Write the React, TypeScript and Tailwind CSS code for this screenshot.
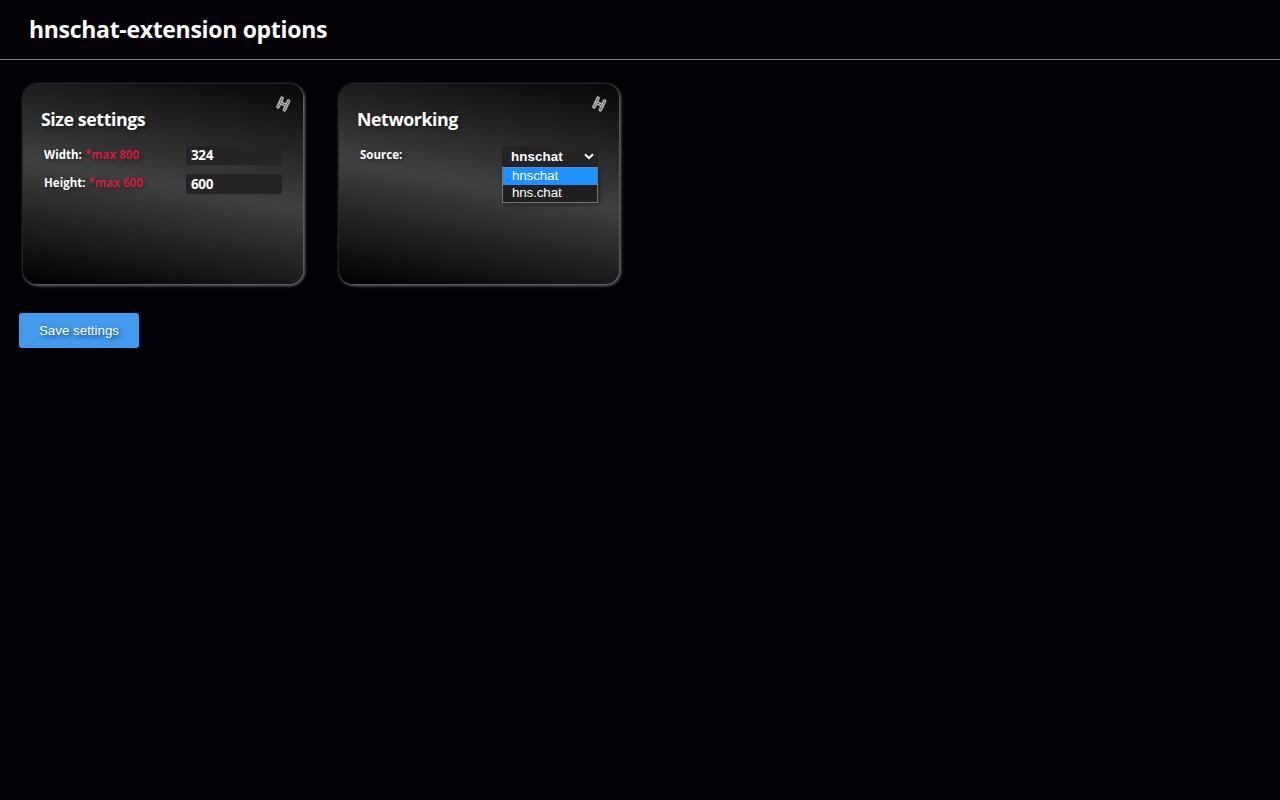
import type { ReactNode } from 'react';

function Logo() {
  return (
    <svg viewBox="0 0 16 16" className="absolute top-3 right-3 h-4 w-4" fill="none" strokeLinecap="round" strokeLinejoin="round">
      <path d="M7 2.2 3 10.9M13.5 5.1 9.5 13.8M5.6 6.6 11 9.4" stroke="#b4b4b4" strokeWidth="3.7" />
      <path d="M7 2.2 5.8 4.8M4.4 8 3 10.9M13.5 5.1 12.2 8M10.8 11 9.5 13.8M5.4 6.6 11.3 9.4" stroke="#505050" strokeWidth="0.9" />
    </svg>
  );
}

function Card({ title, children }: { title: string; children: ReactNode }) {
  return (
    <section className="relative h-[200px] w-[280px] rounded-[14px] bg-[linear-gradient(10deg,#000_0%,#404040_50%,#080606_100%)] pt-[23px] pl-[18px] shadow-[1px_1px_3px_1px_#68686e]">
      <Logo />
      <h2 className="h-6 text-[17.8px] leading-6 font-bold tracking-[-0.43px] [text-shadow:2px_2px_4px_#0006]">{title}</h2>
      {children}
    </section>
  );
}

function Label({ text, hint }: { text: string; hint?: string }) {
  return (
    <label className="w-[142px] pl-[3px] text-[11.5px] leading-[18px] font-bold tracking-[0.03px] whitespace-pre [text-shadow:2px_2px_4px_#0006]">
      {text}
      {hint && <span className="text-[#cf1b3e]"> {hint}</span>}
    </label>
  );
}

export default function App() {
  return (
    <div className="min-h-screen bg-[#020207] font-['Open_Sans','Noto_Sans',sans-serif] text-white">
      <header className="h-[60px] border-b border-[#808080] pt-[13px] pl-[29px]">
        <h1 className="text-[23px] leading-8 font-bold tracking-[-0.31px] whitespace-nowrap">hnschat-extension options</h1>
      </header>
      <main className="pt-6">
        <div className="flex gap-9 pl-[23px]">
          <Card title="Size settings">
            <div className="mt-[15px] flex h-7 items-start">
              <Label text="Width:" hint="*max 800" />
              <div className="ml-[3px] h-[19px] w-24 rounded-[2px] bg-[#242424] pl-[5px] text-[13.5px] leading-[19px] font-bold tracking-[-0.4px]">324</div>
            </div>
            <div className="flex h-7 items-start">
              <Label text="Height:" hint="*max 600" />
              <div className="ml-[3px] h-5 w-24 rounded-[2px] bg-[#242424] pl-[5px] text-[13.5px] leading-5 font-bold tracking-[-0.4px]">600</div>
            </div>
          </Card>
          <Card title="Networking">
            <div className="mt-[15px] flex items-start">
              <Label text="Source:" />
              <div className="relative ml-[3px] h-[21px] w-24 rounded-[2px] bg-[#242424] font-['Liberation_Sans',Arial,sans-serif] text-[13.33px]">
                <div className="flex items-center justify-between pr-1 pl-[9px] leading-[21px] font-bold tracking-[0.1px]">
                  hnschat
                  <svg viewBox="0 0 10 7" className="h-[7px] w-[10px]" fill="none" stroke="white" strokeWidth="2">
                    <path d="m1 1.2 4 4 4-4" />
                  </svg>
                </div>
                <div className="absolute top-[21px] left-0 h-9 w-24 border border-[#767676] border-t-[#4b91d8] bg-[#202020] shadow-[2px_2px_4px_#0005]">
                  <div className="h-[17px] bg-[#1e90ff] pl-[9px] leading-4 tracking-[-0.1px]">hnschat</div>
                  <div className="pl-[9px] leading-4 tracking-[-0.1px]">hns.chat</div>
                </div>
              </div>
            </div>
          </Card>
        </div>
        <button className="mt-[29px] ml-[19px] block h-[35px] w-[120px] rounded-[3px] bg-[#429bef] font-['Liberation_Sans',Arial,sans-serif] text-[13.33px] [text-shadow:2px_2px_4px_#0009]">
          Save settings
        </button>
      </main>
    </div>
  );
}
